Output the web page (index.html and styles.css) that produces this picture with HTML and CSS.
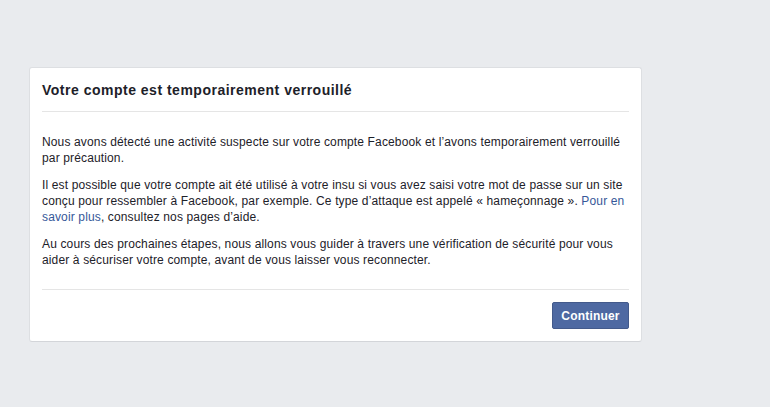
FILE: index.html
```html
<!DOCTYPE html>
<html lang="fr">
<head>
<meta charset="utf-8">
<title>Votre compte est temporairement verrouillé</title>
<link rel="stylesheet" href="styles.css">
</head>
<body>
<div class="page">
  <div class="card">
    <div class="card-header">
      <h2 class="card-title">Votre compte est temporairement verrouillé</h2>
    </div>
    <div class="card-body">
      <p>Nous avons détecté une activité suspecte sur votre compte Facebook et l’avons temporairement verrouillé par précaution.</p>
      <p>Il est possible que votre compte ait été utilisé à votre insu si vous avez saisi votre mot de passe sur un site conçu pour ressembler à Facebook, par exemple. Ce type d’attaque est appelé « hameçonnage ». <a href="#" class="link">Pour en savoir plus</a>, consultez nos pages d’aide.</p>
      <p>Au cours des prochaines étapes, nous allons vous guider à travers une vérification de sécurité pour vous aider à sécuriser votre compte, avant de vous laisser vous reconnecter.</p>
    </div>
    <div class="card-footer">
      <button class="btn-primary" type="button">Continuer</button>
    </div>
  </div>
</div>
</body>
</html>
```

FILE: styles.css
```css
html, body {
  margin: 0;
  padding: 0;
  background: #e9ebee;
  font-family: "Liberation Sans", Arial, Helvetica, sans-serif;
  color: #1d2129;
}

.page {
  padding: 67px 0 0 29px;
}

.card {
  box-sizing: border-box;
  width: 613px;
  background: #fff;
  border: 1px solid #dddfe2;
  border-bottom-color: #d3d5d9;
  border-radius: 3px;
  padding: 0 12px;
}

.card-header {
  padding: 13px 0 12px;
  border-bottom: 1px solid #e5e5e5;
}

.card-title {
  margin: 0;
  font-size: 14px;
  line-height: 18px;
  font-weight: bold;
  letter-spacing: 0.5px;
  color: #1d2129;
}

.card-body {
  padding: 22px 0 21px;
  font-size: 12px;
  line-height: 16px;
  letter-spacing: 0.14px;
}

.card-body p {
  margin: 0 0 11px;
}

.card-body p:last-child {
  margin-bottom: 0;
}

.link {
  color: #365899;
  text-decoration: none;
}

.card-footer {
  border-top: 1px solid #e5e5e5;
  padding: 12px 0;
  display: flex;
  justify-content: flex-end;
}

.btn-primary {
  box-sizing: border-box;
  height: 27px;
  width: 77px;
  padding: 0;
  background: #4e69a2;
  border: 1px solid #435a8b;
  border-radius: 2px;
  color: #fff;
  font-family: "Liberation Sans", Arial, Helvetica, sans-serif;
  font-size: 12px;
  font-weight: bold;
  letter-spacing: 0.2px;
  cursor: pointer;
}
```
